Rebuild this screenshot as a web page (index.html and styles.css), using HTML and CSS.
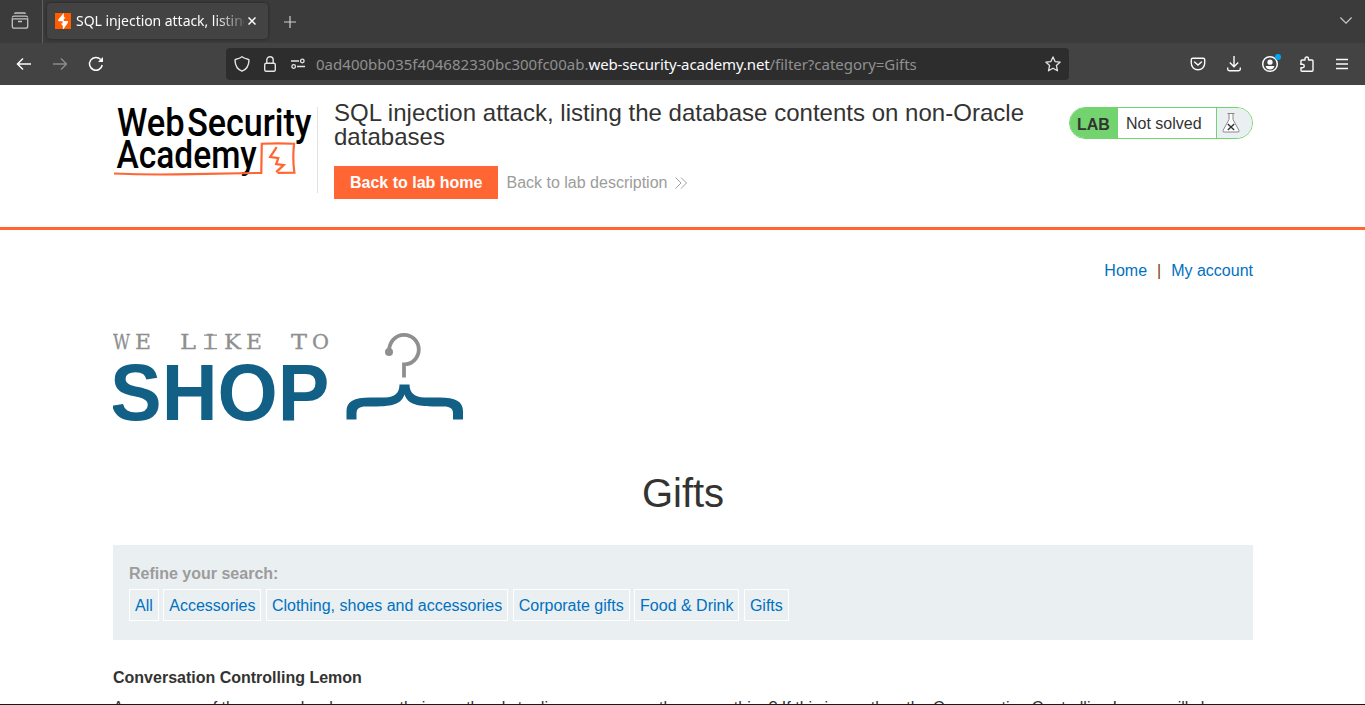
FILE: index.html
```html
<!DOCTYPE html>
<html lang="en">
<head>
<meta charset="utf-8">
<title>SQL injection attack, listing the database contents on non-Oracle databases</title>
<link rel="stylesheet" href="styles.css">
</head>
<body>
<div class="tabbar">
  <div class="recent"><svg width="18" height="18" viewBox="0 0 18 18" fill="none" stroke="#c4c4c4" stroke-width="1.3"><path d="M3.500 1.800q.3-.8 1.200-.8h8.600q.9 0 1.200.8"/><path d="M1.300 5.500q.2-1.400 1.600-1.400h12.200q1.400 0 1.600 1.400M1.300 6.800h15.400v7.400q0 2-2 2H3.300q-2 0-2-2zM7 9.500h4"/></svg></div>
  <div class="tab">
    <svg class="favicon" width="16" height="16" viewBox="0 0 16 16"><path fill="#ff5d00" d="M0 0h16v16H0z"/><path fill="#fff" d="M8.800 0 3.300 6.500v1.700h4.200v2.300H5.600l2.200 2.200V16h.8l4.300-6.300V8H8.800V5.500h1.700L8.800 3.600z"/></svg>
    <span class="tab-title">SQL injection attack, listing</span>
    <svg class="tab-close" width="8" height="8" viewBox="0 0 8 8" stroke="#fbfbfe" stroke-width="1.500"><path d="m.5.5 7 7m0-7-7 7"/></svg>
  </div>
  <svg class="newtab" width="12" height="12" viewBox="0 0 12 12" stroke="#d0d0d0" stroke-width="1.200"><path d="M6 0v12M0 6h12"/></svg>
  <svg class="alltabs" width="12" height="7" viewBox="0 0 12 7" fill="none" stroke="#c8c8c8" stroke-width="1.200"><path d="m.4.5 5.600 5.600L11.600.5"/></svg>
</div>
<div class="toolbar">
  <div class="nav">
    <svg width="16" height="16" viewBox="0 0 16 16" fill="none" stroke="#fbfbfe" stroke-width="1.500"><path d="M15 8H2M7 2.500 1.500 8 7 13.500"/></svg>
    <svg width="16" height="16" viewBox="0 0 16 16" fill="none" stroke="#8c8c8c" stroke-width="1.400"><path d="M1 8h13M9 2.500 14.500 8 9 13.500"/></svg>
    <svg width="16" height="16" viewBox="0 0 16 16" fill="none" stroke="#fbfbfe" stroke-width="1.500"><path d="M14.200 9A6.400 6.400 0 1 1 12.700 3.600"/><path d="M15 1v5h-5z" fill="#fbfbfe" stroke="none"/></svg>
  </div>
  <div class="urlbar">
    <svg width="16" height="16" viewBox="0 0 16 16" fill="none" stroke="#e4e4e8" stroke-width="1.400" stroke-linejoin="round"><path d="M8 .8C6.200 2.200 4 2.900 2 3.200c-.8.100-1 .5-1 1.200C1.200 9.500 3.500 13.500 8 15.200c4.500-1.700 6.800-5.700 7-10.800 0-.7-.2-1.100-1-1.200C12 2.900 9.800 2.200 8 .8z"/></svg>
    <svg width="14" height="16" viewBox="0 0 14 16" fill="none" stroke="#e4e4e8" stroke-width="1.400"><rect x="1.700" y="7.200" width="10.600" height="8" rx="1.500"/><path d="M3.800 7V4a3.200 3.200 0 0 1 6.400 0v3"/></svg>
    <svg width="16" height="12" viewBox="0 0 16 12" fill="none" stroke="#e4e4e8" stroke-width="1.300"><path d="M1 3h8M7 8.500h8"/><circle cx="12.300" cy="3" r="1.800"/><circle cx="3.700" cy="8.500" r="1.800"/></svg>
    <div class="url"><span class="u1">0ad400bb035f404682330bc300fc00ab.</span><span class="u2">web-security-academy.net</span><span class="u3">/filter?category=Gifts</span></div>
    <svg class="star" width="16" height="16" viewBox="0 0 16 16" fill="none" stroke="#e4e4e8" stroke-width="1.300" stroke-linejoin="round"><path d="m8 .9 2.100 4.700 5.100.5-3.800 3.500 1.100 5.200L8 12.200l-4.500 2.600 1.100-5.200L.8 6.100l5.100-.5z"/></svg>
  </div>
  <div class="tools">
    <svg width="16" height="16" viewBox="0 0 16 16" fill="none" stroke="#fbfbfe" stroke-width="1.400"><path d="M2.700 2.200h10.600q1.400 0 1.400 1.400v3.700a6.700 6.500 0 0 1-13.400 0V3.600q0-1.400 1.400-1.400zM4.500 6 8 9.100 11.500 6" stroke-linecap="round"/></svg>
    <svg width="16" height="16" viewBox="0 0 16 16" fill="none" stroke="#fbfbfe" stroke-width="1.400"><path d="M8 0v10.500M3.800 6.500 8 10.700l4.200-4.200M1.700 11.500v1.600q0 1.600 1.600 1.600h9.400q1.600 0 1.600-1.600v-1.600"/></svg>
    <svg width="22" height="20" viewBox="0 0 22 20"><circle cx="10" cy="10" r="7.300" fill="none" stroke="#fbfbfe" stroke-width="1.500"/><circle cx="10" cy="8.200" r="2.600" fill="#fbfbfe"/><path d="M5.500 12h9q-1 3.600-4.500 3.600T5.500 12z" fill="#fbfbfe"/><circle cx="18" cy="3" r="3" fill="#00a9f4"/></svg>
    <svg width="16" height="16" viewBox="0 0 16 16" fill="none" stroke="#fbfbfe" stroke-width="1.400" stroke-linejoin="round"><path d="M2 7V5q0-1 1-1h3V2.700a1.700 1.700 0 0 1 3.500 0V4H13q1 0 1 1v9.300q0 1-1 1H3q-1 0-1-1v-2.500h1.500a1.800 1.800 0 0 0 0-3.600H1.700z"/></svg>
    <svg width="14" height="12" viewBox="0 0 14 12" stroke="#fbfbfe" stroke-width="1.300"><path d="M1 1.500h12M1 6h12M1 10.500h12"/></svg>
  </div>
</div>
<header class="lab-header">
  <div class="container header-row">
    <svg class="academy" width="205" height="86" viewBox="0 0 205 86">
      <g class="academy-text"><text x="4" y="28.500" textLength="68" lengthAdjust="spacingAndGlyphs">Web</text><text x="74.500" y="28.500" textLength="125" lengthAdjust="spacingAndGlyphs">Security</text><text x="3.500" y="61" textLength="141" lengthAdjust="spacingAndGlyphs">Academy</text></g>
      <path d="M1 66.600q37 1.700 78 .6l70-1.200.5-29.300q16-.8 32.500 0-1.800 15 .3 29l-17 .2" fill="none" stroke="#ff6633" stroke-width="2.200"/>
      <path d="m164.500 40-6.500 10 8 1.200-2 6 7.500 1-7.500 7" fill="none" stroke="#ff6633" stroke-width="2.300"/>
    </svg>
    <div class="title-block">
      <h2>SQL injection attack, listing the database contents on non-Oracle databases</h2>
      <div class="actions"><a class="button">Back to lab home</a><a class="desc">Back to lab description<svg width="14" height="12" viewBox="0 0 14 12" fill="none" stroke="#a0a0a0"><path d="m1.500.5 5.500 5.500-5.500 5.500M7 .5 12.500 6 7 11.500"/></svg></a></div>
    </div>
    <div class="status"><b>LAB</b><span>Not solved</span><i><svg width="18" height="22" viewBox="0 0 18 22" fill="none" stroke="#888"><path d="M5.500 1.500h7M7 1.500v6L1 18.500q-.5 1.500 1 1.500h14q1.500 0 1-1.500L11 7.500v-6" fill="#fff"/><path d="m5.800 12 6.400 6m0-6-6.400 6" stroke="#333" stroke-width="1.400"/></svg></i></div>
  </div>
</header>
<main class="container">
  <nav class="links"><a>Home</a><span>|</span><a>My account</a></nav>
  <svg class="shop" width="352" height="92" viewBox="0 0 352 92">
    <g class="tagline"><text x="0" y="18" textLength="17" lengthAdjust="spacingAndGlyphs">W</text><text x="22" y="18" textLength="16" lengthAdjust="spacingAndGlyphs">E</text><text x="67" y="18" textLength="16" lengthAdjust="spacingAndGlyphs">L</text><text class="narrow-i" x="93" y="18">I</text><text x="111" y="18" textLength="17" lengthAdjust="spacingAndGlyphs">K</text><text x="133" y="18" textLength="16" lengthAdjust="spacingAndGlyphs">E</text><text x="178" y="18" textLength="16" lengthAdjust="spacingAndGlyphs">T</text><text x="199" y="18" textLength="17" lengthAdjust="spacingAndGlyphs">O</text></g>
    <path d="M91 4.200h13M91 17.700h13" stroke="#8f8f8f" stroke-width="1.300"/>
    <text class="shop-name" x="-3" y="88.500" textLength="219.500" lengthAdjust="spacingAndGlyphs">SHOP</text>
    <path d="M276 20.500c0-9 6-16.700 15-16.700a14.700 14.700 0 0 1 0 29.600V46.500" fill="none" stroke="#8f8f8f" stroke-width="3.800"/><circle cx="276" cy="21" r="4" fill="#8f8f8f"/>
    <path fill="#126085" d="M286.500 53.500h10c0 8 5 13 15 13h15c16 0 23.500 4 23.500 13.500v8.500h-10v-6c0-5-3-7-9-7-23 0-35.500 0-39.500-12-4 12-16 12-39 12-6 0-9 2-9 7v6h-10V80c0-9.500 7.500-13.500 23.500-13.500h15c10 0 14.500-5 14.500-13z"/>
  </svg>
  <h1>Gifts</h1>
  <section class="filters">
    <label>Refine your search:</label>
    <div class="chips"><a>All</a><a>Accessories</a><a>Clothing, shoes and accessories</a><a>Corporate gifts</a><a>Food &amp; Drink</a><a>Gifts</a></div>
  </section>
  <h3>Conversation Controlling Lemon</h3>
  <p>Are you one of those people who opens their mouth only to discover you say the wrong thing? If this is you then the Conversation Controlling Lemon will change the way you socialize forever!</p>
</main>
</body>
</html>
```
FILE: styles.css
```css
* { box-sizing: border-box; }
html { overflow: hidden; }
body { margin: 0; height: 705px; overflow: hidden; background: #fff; color: #333332; font: 16px/20px "Liberation Sans", Arial, sans-serif; border-bottom: 1px solid #181818; display: flex; flex-direction: column; }
svg { flex: none; display: block; }
h1, h2, h3, p { margin: 0; font-weight: 400; }
.tabbar { flex: none; height: 43px; background: #3b3b3b; display: flex; align-items: center; font-family: "Noto Sans", sans-serif; }
.recent { width: 43px; height: 43px; padding: 12px 0 0 11px; border-right: 1px solid #606060; }
.tab { width: 221px; height: 36px; margin: 0 0 1px 4px; padding: 0 12px 0 8px; border-radius: 4px; background: #434343; box-shadow: 0 0 3px #202020; display: flex; align-items: center; }
.favicon { margin-right: 5px; }
.tab-title { width: 168px; overflow: hidden; white-space: nowrap; font-size: 14px; letter-spacing: -.05px; color: #fbfbfe; -webkit-mask-image: linear-gradient(90deg, #000 138px, transparent 174px); mask-image: linear-gradient(90deg, #000 138px, transparent 174px); }
.tab-close { margin-left: 4px; }
.newtab { margin-left: 16px; }
.alltabs { margin: 0 13px 3px auto; }
.toolbar { flex: none; height: 42px; background: #434343; display: flex; align-items: center; }
.nav { width: 226px; padding-left: 16px; display: flex; gap: 20px; }
.urlbar { width: 843px; height: 32px; border-radius: 4px; background: #2d2d2d; padding: 0 8px; display: flex; align-items: center; }
.urlbar svg:nth-child(2) { margin-left: 13px; }
.urlbar svg:nth-child(3) { margin-left: 13px; }
.url { width: 710px; margin-left: 10px; font: 15px/20px "Noto Sans", sans-serif; white-space: nowrap; color: #909090; display: flex; }
.u1 { letter-spacing: .02px; }
.u2 { color: #fbfbfe; letter-spacing: -.14px; }
.u3 { letter-spacing: -.03px; }
.star { margin-left: auto; }
.tools { margin-left: auto; padding-right: 16px; display: flex; align-items: center; gap: 20px; }
.tools svg:nth-child(3) { margin: 0 -3px 0 -2px; }
.container { width: 1140px; margin: 0 0 0 113px; }
.lab-header { flex: none; height: 145px; border-bottom: 3px solid #ff6633; }
.header-row { padding-top: 22px; display: flex; align-items: flex-start; }
.academy { border-right: 1px solid #e2e2e2; }
.academy-text { font: 500 39px Roboto, sans-serif; fill: #000; }
.title-block { width: 735px; margin: -6px 0 0 16px; }
h2 { font-size: 24px; line-height: 24px; width: 710px; letter-spacing: .018px; }
.actions { display: flex; margin-top: 17px; line-height: 33px; }
.button { background: #ff6633; color: #fff; font-weight: 700; padding: 0 16px; height: 33px; }
.desc { color: #9c9c9b; margin-left: 8px; display: flex; align-items: center; }
.desc svg { margin-left: 7px; }
.status { width: 184px; height: 32px; border: 1px solid #72d36f; border-radius: 16px; overflow: hidden; display: flex; line-height: 31px; }
.status b { width: 48px; background: #72d36f; padding: 1px 0 0 7px; }
.status span { width: 98px; padding-left: 8px; }
.status i { flex: 1; border-left: 1px solid #72d36f; background: #eaeff2; padding: 4px 0 0 5px; }
.links { display: flex; justify-content: flex-end; margin-top: 31px; }
.links a, .chips a { color: #0071bf; }
.links span { margin: 0 10px; color: #7a3b05; }
.shop { margin-top: 50px; }
.tagline { font: 20px "DejaVu Serif", serif; fill: #8f8f8f; stroke: #8f8f8f; stroke-width: .3px; }
.shop-name { font: 700 80px "Liberation Sans", Arial, sans-serif; fill: #126085; }
h1 { font-size: 40px; line-height: 44px; text-align: center; margin-top: 48px; }
.filters { height: 95px; margin-top: 30px; padding: 19px 16px 0; background: #eaeff2; }
.filters label { display: block; color: #9c9c9b; font-weight: 700; }
.chips { display: flex; gap: 4.450px; margin-top: 5px; }
.chips a { border: 1px solid #fff; padding: 0 5px; height: 32px; line-height: 31px; white-space: nowrap; }
h3 { font-size: 16px; font-weight: 700; margin-top: 28px; }
p { margin-top: 10px; }
```
